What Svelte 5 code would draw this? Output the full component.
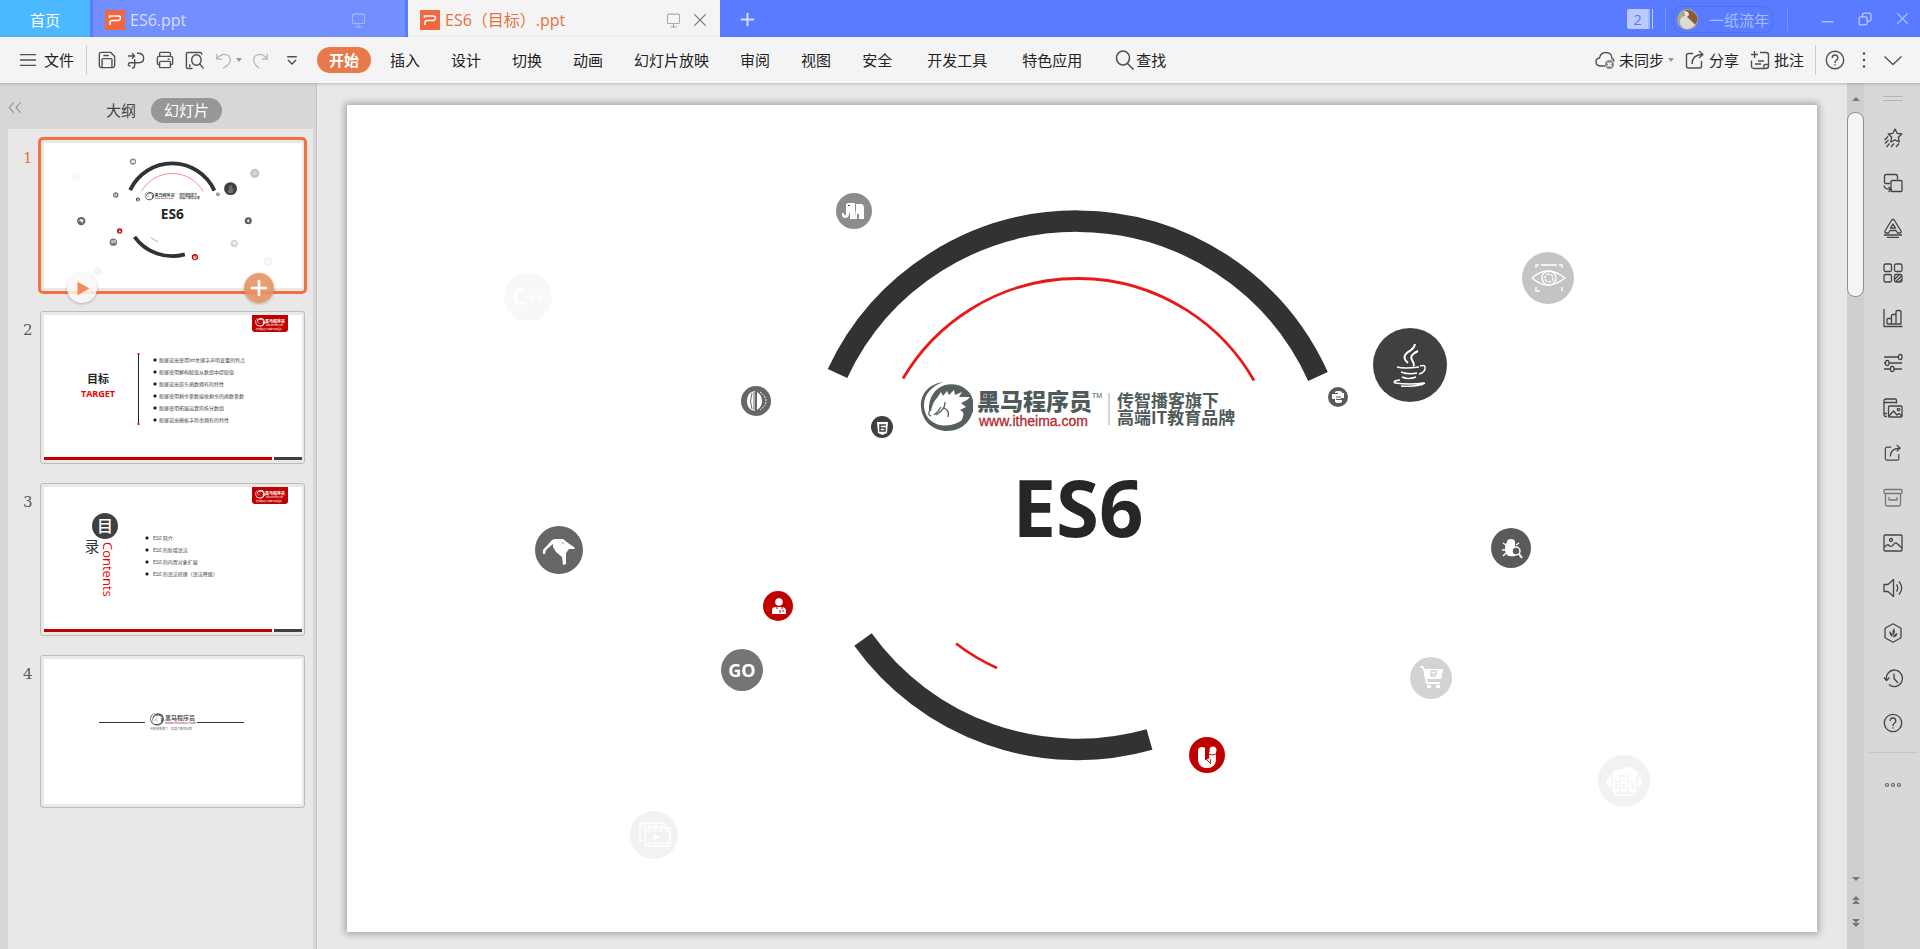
<script>
  const menus = ['插入', '设计', '切换', '动画', '幻灯片放映', '审阅', '视图', '安全'];
  const wideMenus = ['开发工具', '特色应用'];

  const icons = {
    menu: '<path d="M1 4H19M1 10H19M1 16H19"/>',
    save: '<path d="M3 1.5H14L18.5 6V16.5Q18.5 18.5 16.500 18.500H3.500Q1.500 18.500 1.500 16.500V3.500Q1.500 1.500 3.500 1.500"/><path d="M4.500 18V9.500Q4.500 8.500 5.500 8.500H14.500Q15.500 8.500 15.500 9.500V18M6 5H12"/>',
    pdf: '<path d="M1 5.500H8M5.500 2.500L8.500 5.500L5.500 8.500M11 2.500H13Q18.500 3 18.500 8T13 13H3.500Q1.500 13 1.500 15T4 16.500M8.500 9V16Q8.500 19 5.500 19M8.500 13"/>',
    print: '<path d="M4 6V2.500Q4 1.500 5 1.500H15Q16 1.500 16 2.500V6M4 15H3Q1.500 15 1.500 13.500V8Q1.500 6 3.500 6H16.500Q18.500 6 18.500 8V13.500Q18.500 15 17 15H16M13 9H15.500"/><rect x="4" y="11.500" width="12" height="7" rx="1"/>',
    preview: '<path d="M8 18.500H3Q1.500 18.500 1.500 17V3Q1.500 1.500 3 1.500H16Q17.500 1.500 17.500 3V4M5 14V17"/><ellipse cx="12" cy="9.500" rx="5" ry="5.500"/><path d="M15.500 13.500L19.500 18.500"/>',
    undo: '<path d="M2 3V9H8M2.500 8.500Q7 3 12 4T17 10Q17 15 9 19"/>',
    redo: '<path d="M18 3V9H12M17.500 8.500Q13 3 8 4T3 10Q3 15 9 19"/>',
    more: '<path d="M4 6H16M5 10L10 15L15 10"/>',
    search: '<ellipse cx="8" cy="8" rx="6.500" ry="7"/><path d="M12.500 13.500L18.500 19.500"/>',
    sync: '<path d="M10 16H5Q1 15.500 1 12Q1 8.500 4.500 8Q5.500 2.500 11 2.500T17 8.500Q19 9.500 19 11.500"/><circle cx="14.500" cy="14.500" r="4.500" fill="#888" stroke="none"/><path d="M12.500 12.500L16.500 16.500M16.500 12.500L12.500 16.500" stroke="#fff"/>',
    share: '<path d="M8 3.500H3.500Q1.500 3.500 1.500 5.500V16Q1.500 18 3.500 18H14.500Q16.500 18 16.500 16V11M7 14Q7 5 17 4.500M14 1L18 4.500L14 8"/>',
    note: '<path d="M4.500 1V8M1 4.500H8M10 2.500H16Q18.500 2.500 18.500 5V16Q18.500 18.500 16 18.500H4Q1.500 18.500 1.500 16V10.500M5 14H11M8 11H14M14 18V15.500Q14 14.500 15 14.500H18"/>',
    help: '<circle cx="10" cy="10" r="8.700"/><path d="M7.200 8Q7.200 5 10 5T12.800 8Q12.800 9.500 11 10.500Q10 11.200 10 13M10 14.300V15.500"/>',
    dots: '<g fill="currentColor" stroke="none"><circle cx="10" cy="3.500" r="1.300"/><circle cx="10" cy="10" r="1.300"/><circle cx="10" cy="16.500" r="1.300"/></g>',
    down: '<path d="M1.500 6.500L10 14.500L18.500 6.500"/>',
    collapse: '<path d="M9 3L3 10L9 17M18 3L12 10L18 17"/>',
    screen: '<rect x="2" y="1.500" width="16" height="12.500" rx="1.500"/><path d="M10 14V18.500M6 18.500H14"/>',
    close: '<path d="M2 2L18 18M18 2L2 18"/>',
    plus: '<path d="M10 1V19M1 10H19"/>',
    minimize: '<path d="M1 15H19"/>',
    restore: '<rect x="1.500" y="7" width="11.500" height="11.500" rx="2"/><path d="M6.500 7V4Q6.500 1.500 9 1.500H16Q18.500 1.500 18.500 4V10.500Q18.500 13 16 13H13"/>',
    star: '<path d="M12 1L14.100 5.300L18.800 6L15.400 9.300L16.200 14L12 11.800L7.800 14L8.600 9.300L5.200 6L9.900 5.300Z"/><path d="M5 8.500L1.500 12M5.500 12L2 15.500M6.500 15.500L3.500 19M11 15.500L8 19M16 15.500L13 19"/>',
    swap: '<path d="M7 10.500H3Q1.500 10.500 1.500 9V3Q1.500 1.500 3 1.500H13Q14.500 1.500 14.500 3V6.500"/><rect x="8" y="7.500" width="11" height="11" rx="1"/><path d="M1 12.500Q1.500 16.500 8 16.500M5.500 14L8.500 16.500L5.500 19"/>',
    letter: '<path d="M8.500 2.500Q10 0 11.500 2.500L18 13Q18.500 15 16.500 15H14.500L13 12.500H7L5.500 15H3.500Q1.500 15 2 13Z"/><path d="M10 6L12.500 10H7.500ZM1 17H19M4 19.500H16"/>',
    grid: '<rect x="1" y="1" width="7.500" height="7.500" rx="1.500"/><rect x="11.500" y="1" width="7.500" height="7.500" rx="1.500"/><rect x="1" y="11.500" width="7.500" height="7.500" rx="1.500"/><rect x="11.500" y="11.500" width="7.500" height="7.500" rx="1.500"/><path d="M12 16L16 12M13 18.500L18.500 13M16.500 18.500L18.500 16.500"/>',
    chart: '<path d="M1 1V18.500H19.500M4 16V11.500Q4 10.500 5 10.500H8.500V16M8.500 10.500V7.500Q8.500 6.500 9.500 6.500H13V16M13 6.500V4Q13 2.500 14.500 2.500H16.500Q18 2.500 18 4V16H4"/>',
    sliders: '<path d="M1 4H15.500M1 10H2.500M6 10H19M1 16H7M11 16H19"/><rect x="15.500" y="1.500" width="3.500" height="5" rx="1.500"/><rect x="2.500" y="7.500" width="3.500" height="5" rx="1.500"/><rect x="7.500" y="13.500" width="3.500" height="5" rx="1.500"/>',
    gallery: '<path d="M4 18.500H3Q1 18.500 1 16.500V3Q1 1 3 1H12Q13.500 1 13.500 2.500V5.500M1 4.500H13M1 15.500H4"/><rect x="5.500" y="8" width="13.500" height="11" rx="1"/><path d="M6 18L10.500 13L14 17L16 15.500L19 18"/><circle cx="15.500" cy="11.500" r="1.200"/>',
    archive: '<rect x="1" y="1.500" width="18" height="4" rx="1"/><path d="M2.500 5.500V16.500Q2.500 18 4 18H16Q17.500 18 17.500 16.500V5.500M6 9V12H14V9"/>',
    picture: '<rect x="1" y="2" width="18" height="16" rx="1"/><path d="M1.500 14L4 12Q5 11.200 6 12.500T9 13L12 10Q13 9.500 14 10.500T19 15"/><circle cx="8" cy="7" r="1.500"/>',
    sound: '<path d="M1 6.500H5L10.500 1.500V18.500L5 13.500H1ZM13.500 6.500Q16 10 13.500 13.500M16 3.500Q21.500 10 16 16.500"/>',
    leaf: '<path d="M10 .8L18 5.300V14.700L10 19.200L2 14.700V5.300Z"/><path d="M10 13Q8.500 8 11 5Q13 9 10 13M9.500 14Q6 12 6.500 8Q9.500 10 9.500 14M10 14.500Q11 10.500 14.500 10Q14 14 10 14.500" fill="currentColor" stroke="none"/>',
    history: '<path d="M3.500 12A8 8.300 0 1 1 6 16.500M1 9.500L3.500 12.500L6.500 9.500M11 5.500V10.500L15 15"/>',
    play: '<path d="M2 1L18 10L2 19Z" fill="currentColor" stroke="none"/>'
  };

  const tools = ['star', 'swap', 'letter', 'grid', 'chart', 'sliders', 'gallery', 'share', 'archive', 'picture', 'sound', 'leaf', 'history', 'help'];

  const goals = ['能够说出使用let关键字声明变量的特点', '能够使用解构赋值从数组中提取值', '能够说出箭头函数拥有的特性', '能够使用剩余参数接收剩余的函数参数', '能够使用拓展运算符拆分数组', '能够说出模板字符串拥有的特性'];
  const topics = ['ES6 简介', 'ES6 的新增语法', 'ES6 的内置对象扩展', 'ES6 的语法转换（语法降级）'];

  const bubbles = [
    { x: 181, y: 192, r: 24, c: '#f8f8f8', art: '<text y="8" text-anchor="middle" font-size="23" font-weight="700" font-family="Open Sans, sans-serif" fill="#fff">C<tspan font-size="15" dy="-2">++</tspan></text>' },
    { x: 507, y: 106, r: 18, c: '#8c8c8c', art: '<path fill="#fff" d="M-8-7Q-7-8-5-8H1V8H-4V2H-5V4Q-6 7-9 7T-12 3V2H-10V4Q-9 5-8 3ZM2-7H8Q10-6 10-3V8H5V3H3V8H1Z"/><path d="M1.500-7V0" stroke="#8c8c8c"/><path d="M-6-5.500H-4" stroke="#448"/>' },
    { x: 409, y: 296, r: 15, c: '#666', art: '<path fill="#fff" d="M-1-10V10Q-9 9-9 0T-1-10M1-9Q6-6 6 0T1 9Z"/><path d="M-4-8Q-7 0-4 8M-2-9V9" stroke="#666" fill="none"/><path d="M4-9Q10-5 10 0T4 9" fill="none" stroke="#fff" stroke-dasharray="2 1"/>' },
    { x: 535, y: 322, r: 11, c: '#3f3f3f', art: '<path fill="#fff" d="M-5-5H6L5 6L.5 8L-4 6Z"/><path d="M4-2H-2V4H3V1H-2" fill="none" stroke="#3f3f3f" stroke-width="1.500"/>' },
    { x: 1063, y: 260, r: 37, c: '#404040', art: '<g fill="none" stroke="#fff" stroke-width="1.500"><path d="M5-21Q4-16-2-13Q-9-8-2-2M8-14Q-1-10 2-5T3 1" stroke-width="2"/><path d="M-13 2Q-6 4 9 2M10 1Q16-1 15 4Q14 8 9 9M-9 7Q-1 10 7 8M-8 12Q-2 15 6 12M-10 15Q-18 16-15 18Q0 20 14 18M-9 21Q8 22 15 18"/></g>' },
    { x: 991, y: 292, r: 10, c: '#595959', art: '<path fill="#fff" d="M-3-5Q-3-6 0-6T4-5V-4H6V1H3V2H-2V3H4V5Q3 6 0 6T-3 4V2H-6V-3H0V-4H-3Z"/><path d="M-2 0H3" fill="none" stroke="#595959"/>' },
    { x: 1201, y: 173, r: 26, c: '#c4c4c4', art: '<g fill="none" stroke="#fff" stroke-width="1.400"><path d="M-16 0Q-8-7 0-7T17 0Q8 7 0 7T-16 0"/><circle cx="1" r="7"/><circle cx="1" r="4" stroke-dasharray="3 1"/><path d="M-12-10V-13H-9M-7-13H9M11-13H14V-10M-12 9V13H-8M14 9V13"/></g>' },
    { x: 212, y: 445, r: 24, c: '#666', art: '<path fill="#fff" d="M-16 4V0L-7-10L-4-11H4L9-7L15-3L16-1L10-1L7 3L7 14L4 15L3 7L-3 2L-6-3L-6-6L-13 0L-14 4Z"/><circle cx="4" cy="-7" r=".7" fill="#666"/>' },
    { x: 431, y: 501, r: 15, c: '#c00000', art: '<path fill="#fff" d="M-6 8V4Q-6 1-2 1H3Q8 1 8 5V8Z"/><circle cx="1" cy="-4" r="3.800" fill="#fff"/><path d="M-1 1V3M4 1V3M2 4V7M5 4V6" stroke="#c00000" fill="none"/>' },
    { x: 395, y: 565, r: 21, c: '#757575', art: '<text y="7" text-anchor="middle" font-size="18" font-weight="700" font-family="Open Sans, sans-serif" fill="#fff">GO</text>' },
    { x: 307, y: 730, r: 24, c: '#f2f2f2', art: '<g fill="none" stroke="#fff" stroke-width="1.400"><path d="M-11 6H-14V-12H10V-7"/><rect x="-9" y="-7" width="25" height="18" rx="1"/><path d="M-12-9H8M-7-4H15M-7 8H15" stroke-dasharray="4 2"/></g><path d="M0-1V5L6 2Z" fill="#fff"/>' },
    { x: 1164, y: 443, r: 20, c: '#5a5a5a', art: '<path fill="#fff" d="M-4-6Q-4-9 0-9T4-6V8Q-6 10-6 1Q-6-4-4-6"/><path d="M-8-5L-5-3M-9 2H-5M-8 8L-5 5M8-5L5-3" stroke="#fff" stroke-width="1.500"/><circle cx="5" cy="3" r="4" fill="#5a5a5a" stroke="#fff" stroke-width="1.500"/><path d="M8 6L11 10" stroke="#fff" stroke-width="2"/>' },
    { x: 1084, y: 573, r: 21, c: '#d3d3d3', art: '<path fill="#fff" d="M-11-12H-8L-6-9H12L10 1H-4L-3 4H9V6H-5L-8-9L-11-11ZM-4 7H0V10H-4ZM5 7H9V10H5Z"/><path d="M0-4H5V-7H0V-2H5" stroke="#d3d3d3" stroke-width="1.300" fill="none"/>' },
    { x: 860, y: 650, r: 18, c: '#c00000', art: '<path fill="#fff" d="M-9-4Q-9-8-5-8T-2-5V5L2 11Q4 9 4 5L2 2V-3H9V5Q8 13 0 13T-9 5Z"/><path fill="#fff" d="M-2 5L3 3V12H-2Z"/><circle cx="6" cy="-5" r="3.500" fill="#fff"/><path d="M2-1Q5 1 9-1M-1 4L4 9" stroke="#c00000" fill="none"/>' },
    { x: 1277, y: 676, r: 26, c: '#f2f2f2', art: '<path fill="#fff" d="M-12-5Q-11-14-2-11Q3-17 9-12Q15-12 14-4Q18-3 18 1T13 7V11H-12V7Q-18 5-18 1T-12-5"/><g stroke="#f2f2f2" fill="none" stroke-width="1.300"><rect x="-4" y="-5" width="8" height="16"/><path d="M0-2V1M-2 4H2M-2 7H2M-10 1H-6M-10 4H-6M-10 7H-6M7 1H11M7 4H11M7 7H11M-12-4V10M13-4V10"/></g><path d="M-9 10V14H10V10M0 11V14" stroke="#fff" stroke-width="1.500" fill="none"/>' }
  ];
</script>

{#snippet icon(name, size = 20, weight = 1.4)}
  <svg class="icon" width={size} height={size} viewBox="0 0 20 20" fill="none" stroke="currentColor" stroke-width={weight} stroke-linejoin="round" aria-hidden="true">{@html icons[name]}</svg>
{/snippet}

{#snippet pptLogo()}
  <svg class="icon" width="20" height="20" viewBox="0 0 20 20" aria-hidden="true">
    <rect width="20" height="20" rx="1" fill="#f0683f" />
    <path d="M4.500 8V6H13.500Q15.500 6 15.500 8T13.500 10.500H7Q5 10.500 5 12.500V15" fill="none" stroke="#fff" stroke-width="1.500" />
  </svg>
{/snippet}

{#snippet horse(color)}
  <g fill={color}>
    <path d="M-4-24C-18-22-27-12-26 1C-25 16-13 25 0 25C16 25 27 13 26-2L24 1C22 11 12 19-1 19.500C-14 20-23 11-23-1C-23-12-15-20-4-24Z" />
    <path d="M-18 5C-19-8-12-18-2-21C10-24 23-18 26-6L26 5C24 11 19 15 13 18C16 12 17 8 16 6L13 4L19 1L14-3L20-6L23-9L12-9L15-14L8-11L7-16L2-11L0-15L-4-10L-6-14L-10-8C-14-4-15 1-16 5Z" />
  </g>
  <path d="M-17 4Q-20 9-16 10M-13 9Q-9 6-6 1M-2-4Q-2 1-5 4Q-8 7-11 9M-3 2Q3 5 1 11" fill="none" stroke={color} stroke-width="1.300" />
{/snippet}

{#snippet bubble(b)}
  <g transform="translate({b.x} {b.y})">
    <circle r={b.r} fill={b.c} />
    {@html b.art}
  </g>
{/snippet}

{#snippet cover()}
  <svg class="art" viewBox="0 0 1470 827" role="img" aria-label="ES6">
    <g fill="none">
      <path d="M490.500 268.500A264.500 264.500 0 0 1 971 271.500M516 534.500A264.500 264.500 0 0 0 802.500 634.500" stroke="#313332" stroke-width="21.500" />
      <path d="M556 273.500A203 203 0 0 1 907 275.500M609 538.500A203 203 0 0 0 650 563" stroke="#e81a17" stroke-width="2.800" />
    </g>
    {#each bubbles as b}{@render bubble(b)}{/each}
    <g transform="translate(600 301)">{@render horse('#566061')}</g>
    <g class="brand">
      <text x="630" y="305" font-size="23" font-weight="900" fill="#4f5a5a">黑马程序员</text>
      <text x="745" y="293" font-size="7" fill="#4f5a5a" class="arial">TM</text>
      <text x="632" y="321" font-size="14" fill="#b3282d" stroke="#b3282d" stroke-width=".3" class="arial">www.itheima.com</text>
      <path d="M762 288V320" stroke="#aaa" />
      <text x="770" y="302" font-size="17" font-weight="700" fill="#4f5a5a">传智播客旗下</text>
      <text x="770" y="319" font-size="17" font-weight="700" fill="#4f5a5a">高端IT教育品牌</text>
      <text x="731" y="432" font-size="78" font-weight="700" text-anchor="middle" fill="#262626" class="latin">ES6</text>
    </g>
  </svg>
{/snippet}

{#snippet slideFrame()}
  <path d="M208 0H244V14Q244 17 241 17H211Q208 17 208 14Z" fill="#c00000" />
  <g transform="translate(216 7) scale(.18)">{@render horse('#fff')}</g>
  <text x="221" y="8" font-size="4" font-weight="700" fill="#fff">黑马程序员</text>
  <text x="222" y="11" font-size="2" fill="#fff">www.itheima.com</text>
  <text x="212" y="15" font-size="2" fill="#fff">传智播客旗下高端IT教育品牌</text>
  <rect y="142" width="228" height="3" fill="#c00000" />
  <rect x="230" y="142" width="28" height="3" fill="#404040" />
{/snippet}

{#snippet goalSlide()}
  <svg class="art" viewBox="0 0 258 145">
    {@render slideFrame()}
    <text x="54" y="68" font-size="11" font-weight="700" text-anchor="middle" fill="#222">目标</text>
    <text x="54" y="82" font-size="9" font-weight="700" text-anchor="middle" fill="#e00" class="latin">TARGET</text>
    <path d="M94.500 39V109" stroke="#222" />
    <path d="M93.500 39H95.500M93.500 109H95.500" stroke="#e11" stroke-width="2" />
    {#each goals as goal, i}
      <path d="M111 {43 + i * 12}l2 2l-2 2l-2-2Z" fill="#222" />
      <text x="115" y={47 + i * 12} font-size="5" fill="#444">{goal}</text>
    {/each}
  </svg>
{/snippet}

{#snippet topicSlide()}
  <svg class="art" viewBox="0 0 258 145">
    {@render slideFrame()}
    <circle cx="61" cy="39" r="13" fill="#404040" />
    <text x="61" y="45" font-size="16" font-weight="500" text-anchor="middle" fill="#fff">目</text>
    <text x="48" y="65" font-size="15" text-anchor="middle" fill="#333">录</text>
    <text transform="translate(59 55) rotate(90)" font-size="13" fill="#e00" class="latin">Contents</text>
    {#each topics as topic, i}
      <path d="M103 {49 + i * 12}l2 2l-2 2l-2-2Z" fill="#222" />
      <text x="109" y={53 + i * 12} font-size="5" fill="#444">{topic}</text>
    {/each}
  </svg>
{/snippet}

{#snippet endSlide()}
  <svg class="art" viewBox="0 0 258 145">
    <path d="M55 63.500H101M153 63.500H200" stroke="#333" />
    <g transform="translate(113 60) scale(.26)">{@render horse('#566061')}</g>
    <text x="121" y="61" font-size="6" font-weight="700" fill="#4f5a5a">黑马程序员</text>
    <text x="121" y="65" font-size="4" fill="#b3282d" class="arial">www.itheima.com</text>
    <text x="106" y="71" font-size="3" fill="#777">传智播客旗下　高端IT教育品牌</text>
  </svg>
{/snippet}

<div class="app">
  <header class="titlebar">
    <button class="home">首页</button>
    <button class="tab">{@render pptLogo()}<span>ES6.ppt</span>{@render icon('screen', 15)}</button>
    <div class="tab active">
      {@render pptLogo()}<span>ES6（目标）.ppt</span>{@render icon('screen', 15)}
      <button class="close" aria-label="关闭标签">{@render icon('close', 14, 1.8)}</button>
    </div>
    <button class="add" aria-label="新建">{@render icon('plus', 15, 2.6)}</button>
    <div class="window">
      <span class="count"><b>2</b></span>
      <i class="rule"></i>
      <button class="user">
        <svg width="21" height="21" viewBox="0 0 21 21" aria-hidden="true">
          <circle cx="10.500" cy="10.500" r="10.500" fill="#a9a592" />
          <path d="M4 9Q8 4 13 11L18 16Q12 22 6 19Q1 15 4 9" fill="#dedbd1" />
          <path d="M8 1Q17 0 20 8Q21 13 18 15Q14 11 10 8Z" fill="#8b5a38" />
          <path d="M7 2Q12 2 12 6L9 9Z" fill="#eee4d0" />
        </svg>
        一纸流年
      </button>
      <i class="rule"></i>
      <button class="minimize" aria-label="最小化">{@render icon('minimize', 13, 2)}</button>
      <button class="restore" aria-label="还原">{@render icon('restore', 14, 1.8)}</button>
      <button class="quit" aria-label="关闭">{@render icon('close', 13, 1.8)}</button>
    </div>
  </header>

  <nav class="ribbon">
    <button class="file">{@render icon('menu', 18, 1.6)}文件</button>
    <i class="rule"></i>
    <div class="quick">
      <button aria-label="保存">{@render icon('save', 18, 1.5)}</button>
      <button aria-label="输出为PDF">{@render icon('pdf', 18, 1.5)}</button>
      <button aria-label="打印">{@render icon('print', 18, 1.5)}</button>
      <button aria-label="打印预览">{@render icon('preview', 19, 1.5)}</button>
      <button class="faint" aria-label="撤销">{@render icon('undo', 18)}<i class="caret"></i></button>
      <button class="faint" aria-label="恢复">{@render icon('redo', 18)}</button>
      <button class="drop" aria-label="更多命令">{@render icon('more', 16, 1.8)}</button>
    </div>
    <button class="current">开始</button>
    <div class="menus">
      {#each menus as m}<button>{m}</button>{/each}
      {#each wideMenus as m}<button class="wide">{m}</button>{/each}
      <button class="find">{@render icon('search', 20, 1.6)}查找</button>
    </div>
    <div class="share">
      <button class="named">{@render icon('sync')}未同步<i class="caret"></i></button>
      <button class="named">{@render icon('share')}分享</button>
      <button class="named">{@render icon('note')}批注</button>
      <i class="rule"></i>
      <button aria-label="帮助">{@render icon('help')}</button>
      <button aria-label="更多">{@render icon('dots')}</button>
      <button aria-label="折叠功能区">{@render icon('down')}</button>
    </div>
  </nav>

  <main>
    <aside class="sidebar">
      <div class="views">
        <button class="fold" aria-label="折叠窗格">{@render icon('collapse', 15)}</button>
        <button class="outline">大纲</button>
        <button class="slides">幻灯片</button>
      </div>
      <ol>
        <li class="selected">
          <span class="num">1</span><div class="thumb">{@render cover()}</div>
          <button class="round playbtn" aria-label="播放">{@render icon('play', 15)}</button>
          <button class="round addbtn" aria-label="新建幻灯片">{@render icon('plus', 18, 3)}</button>
        </li>
        <li><span class="num">2</span><div class="thumb">{@render goalSlide()}</div></li>
        <li><span class="num">3</span><div class="thumb">{@render topicSlide()}</div></li>
        <li><span class="num">4</span><div class="thumb">{@render endSlide()}</div></li>
      </ol>
    </aside>

    <section class="stage">
      <div class="slide">{@render cover()}</div>
    </section>

    <div class="scroll">
      <i class="up"></i>
      <div class="grip"></div>
      <div class="steps">
        <i class="dn"></i>
        <span><i class="up"></i><i class="up"></i></span>
        <span><i class="dn"></i><i class="dn"></i></span>
      </div>
    </div>

    <aside class="tools">
      <i class="handle"></i>
      {#each tools as t}
        <button aria-label={t} class:soft={t === 'archive'}>{@render icon(t, t === 'share' ? 18 : 20, 1.3)}</button>
      {/each}
      <i class="line"></i>
      <button class="extra" aria-label="更多工具">
        <svg width="18" height="6" viewBox="0 0 18 6" fill="none" stroke="#666" stroke-width="1.200"><circle cx="3" cy="3" r="1.500" /><circle cx="9" cy="3" r="1.500" /><circle cx="15" cy="3" r="1.500" /></svg>
      </button>
    </aside>
  </main>
</div>

<style>
  :global(body) {
    margin: 0;
  }
  .app {
    min-height: 100vh;
    display: flex;
    flex-direction: column;
    font: 15px/20px 'Open Sans', 'Noto Sans CJK SC', sans-serif;
    color: #222;
    background: #e8e8e8;
  }
  button {
    border: 0;
    padding: 0;
    background: none;
    font: inherit;
    color: inherit;
    white-space: nowrap;
    display: flex;
    align-items: center;
  }
  .icon {
    flex: none;
    display: block;
  }
  .rule {
    width: 1px;
    flex: none;
  }

  .titlebar {
    height: 37px;
    display: flex;
    align-items: stretch;
    background: #587bff;
    color: #d5deff;
  }
  .home {
    width: 90px;
    justify-content: center;
    padding-top: 3px;
    background: #4cb8ff;
    color: #fff;
  }
  .tab {
    width: 312px;
    box-sizing: border-box;
    margin-left: 3px;
    padding: 3px 39px 0 12px;
    display: flex;
    align-items: center;
    gap: 5px;
    font-size: 16px;
    background: #738fff;
  }
  .tab span {
    flex: 1;
    text-align: left;
  }
  .tab > .icon:nth-of-type(2) {
    color: #a5b7ff;
  }
  .tab.active {
    padding-right: 13px;
    background: #f4f4f4;
    color: #e5713f;
  }
  .tab.active > .icon:nth-of-type(2) {
    color: #aaa;
  }
  .close {
    margin-left: 7px;
    color: #777;
  }
  .add {
    margin-left: 20px;
    padding-top: 2px;
  }
  .window {
    margin-left: auto;
    padding-right: 11px;
    display: flex;
    align-items: center;
    color: #bccaff;
  }
  .window .rule {
    height: 24px;
    background: #7894ff;
  }
  .count {
    padding-right: 2px;
    border-right: 1px solid #bccaff;
    margin-right: 12px;
  }
  .count b {
    display: block;
    width: 21px;
    height: 20px;
    border-right: 2px solid #a5b7ff;
    background: #bccaff;
    border-radius: 2px 0 0 2px;
    font-weight: 400;
    text-align: center;
    color: #587bff;
  }
  .user {
    margin: 2px 14px 0 7px;
    height: 27px;
    gap: 11px;
    padding: 0 3px;
    border: 1px solid #5070ea;
    border-radius: 9px;
    color: #a9bbff;
  }
  .minimize {
    margin: 0 24px 0 33px;
  }
  .restore {
    margin-right: 24px;
  }

  .ribbon {
    position: relative;
    height: 46px;
    box-sizing: border-box;
    padding: 0 17px 0 19px;
    display: flex;
    align-items: center;
    background: #f4f4f4;
    box-shadow: 0 1px 3px rgba(0, 0, 0, 0.2);
  }
  .ribbon .icon {
    color: #505050;
  }
  .ribbon .rule {
    height: 30px;
    background: #ccc;
  }
  .file {
    gap: 7px;
    margin-right: 12px;
  }
  .quick {
    display: flex;
    align-items: center;
    gap: 11px;
    margin: 0 17px 0 11px;
  }
  .quick .faint .icon {
    color: #b5b5b5;
  }
  .quick .faint + .faint {
    margin-left: -2px;
  }
  .quick .drop {
    margin-left: 4px;
  }
  .caret {
    margin-left: 3px;
    border: 3px solid transparent;
    border-top: 4px solid #999;
    border-bottom: 0;
  }
  .current {
    width: 54px;
    height: 26px;
    justify-content: center;
    border-radius: 13px;
    background: #e7794b;
    color: #fff;
    font-weight: 700;
  }
  .menus {
    display: flex;
    gap: 31px;
    margin-left: 19px;
  }
  .menus .wide {
    margin-left: 4px;
  }
  .menus .find {
    margin-left: 2px;
    gap: 1px;
  }
  .share {
    margin-left: auto;
    display: flex;
    align-items: center;
    gap: 9px;
  }
  .share .named {
    gap: 4px;
    margin-right: 2px;
  }
  .share .caret {
    margin: 0;
  }

  main {
    flex: 1;
    display: flex;
  }
  .sidebar {
    width: 316px;
    flex: none;
    display: flex;
    flex-direction: column;
    background: #d7d7d7;
    border-right: 1px solid #c2c2c2;
  }
  .views {
    height: 46px;
    padding-top: 8px;
    box-sizing: border-box;
    display: flex;
    align-items: center;
    color: #444;
  }
  .fold {
    margin: 0 84px 5px 7px;
    color: #888;
  }
  .slides {
    margin-left: 15px;
    padding: 0 13px;
    height: 25px;
    border-radius: 13px;
    background: #979797;
    color: #fff;
  }
  ol {
    flex: 1;
    margin: 0 3px 0 8px;
    padding: 10px 0;
    list-style: none;
    display: flex;
    flex-direction: column;
    gap: 19px;
    background: #e8e8e8;
  }
  li {
    position: relative;
    display: flex;
  }
  .num {
    width: 17px;
    padding: 9px 0 0 15px;
    font-family: 'DejaVu Serif', serif;
    color: #5a5a5a;
  }
  .thumb {
    width: 258px;
    padding: 3px 2px 3px 3px;
    border: 1px solid #bcbcbc;
    border-radius: 3px;
  }
  .selected .num {
    color: #ee7443;
  }
  .selected .thumb {
    border-color: transparent;
    outline: 3px solid #f3713f;
    outline-offset: -1px;
  }
  .art {
    display: block;
    width: 100%;
    background: #fff;
    font-family: 'Noto Sans CJK SC', sans-serif;
  }
  .latin {
    font-family: 'Open Sans', sans-serif;
  }
  .arial {
    font-family: 'Liberation Sans', sans-serif;
  }
  .round {
    position: absolute;
    top: 134px;
    width: 30px;
    height: 30px;
    justify-content: center;
    border-radius: 50%;
    box-shadow: 0 1px 3px rgba(0, 0, 0, 0.25);
  }
  .playbtn {
    left: 59px;
    padding-left: 3px;
    background: rgba(250, 248, 246, 0.85);
    color: #f58b50;
  }
  .addbtn {
    left: 236px;
    background: rgba(230, 146, 100, 0.9);
    color: #fff;
  }

  .stage {
    flex: 1;
    min-width: 0;
    padding: 22px 30px 17px;
  }
  .slide {
    box-shadow: 0 0 7px 2px rgba(0, 0, 0, 0.3);
  }

  .scroll {
    width: 17px;
    flex: none;
    display: flex;
    flex-direction: column;
    align-items: center;
    padding: 14px 0 22px;
    box-sizing: border-box;
    background: #cfcfcf;
  }
  .up,
  .dn {
    display: block;
    border: 4px solid transparent;
  }
  .up {
    border-top: 0;
    border-bottom: 4px solid #777;
  }
  .dn {
    border-bottom: 0;
    border-top: 4px solid #777;
  }
  .grip {
    width: 15px;
    height: 183px;
    margin-top: 11px;
    border: 1px solid #909090;
    border-radius: 8px;
    background: #f4f4f4;
  }
  .steps {
    margin-top: auto;
    display: flex;
    flex-direction: column;
    gap: 15px;
  }
  .tools {
    width: 56px;
    flex: none;
    box-sizing: border-box;
    padding-left: 2px;
    display: flex;
    flex-direction: column;
    align-items: center;
    background: #d8d8d8;
    color: #444;
  }
  .handle {
    width: 20px;
    height: 3px;
    margin: 13px 0 14px;
    border: solid #b4b4b4;
    border-width: 1px 0;
  }
  .tools button {
    width: 40px;
    height: 45px;
    justify-content: center;
  }
  .tools .soft {
    color: #777;
  }
  .line {
    width: 49px;
    height: 1px;
    margin: 7px 0 9px;
    background: #c6c6c6;
  }
</style>
